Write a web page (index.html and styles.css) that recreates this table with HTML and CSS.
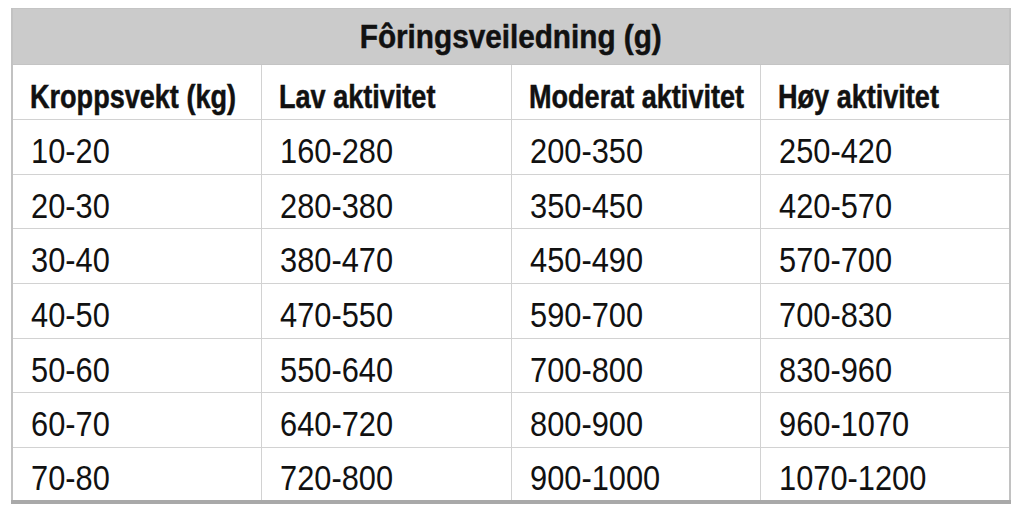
FILE: index.html
```html
<!DOCTYPE html>
<html lang="no">
<head>
<meta charset="utf-8">
<link rel="stylesheet" href="styles.css">
</head>
<body>
<div class="wrap">
<table class="feed">
  <thead>
    <tr class="head"><th class="title" colspan="4"><span class="t">Fôringsveiledning (g)</span></th></tr>
    <tr class="cols"><th><span class="t">Kroppsvekt (kg)</span></th><th><span class="t">Lav aktivitet</span></th><th><span class="t">Moderat aktivitet</span></th><th><span class="t">Høy aktivitet</span></th></tr>
  </thead>
  <tbody>
    <tr><td><span class="t">10-20</span></td><td><span class="t">160-280</span></td><td><span class="t">200-350</span></td><td><span class="t">250-420</span></td></tr>
    <tr><td><span class="t">20-30</span></td><td><span class="t">280-380</span></td><td><span class="t">350-450</span></td><td><span class="t">420-570</span></td></tr>
    <tr><td><span class="t">30-40</span></td><td><span class="t">380-470</span></td><td><span class="t">450-490</span></td><td><span class="t">570-700</span></td></tr>
    <tr><td><span class="t">40-50</span></td><td><span class="t">470-550</span></td><td><span class="t">590-700</span></td><td><span class="t">700-830</span></td></tr>
    <tr><td><span class="t">50-60</span></td><td><span class="t">550-640</span></td><td><span class="t">700-800</span></td><td><span class="t">830-960</span></td></tr>
    <tr><td><span class="t">60-70</span></td><td><span class="t">640-720</span></td><td><span class="t">800-900</span></td><td><span class="t">960-1070</span></td></tr>
    <tr><td><span class="t">70-80</span></td><td><span class="t">720-800</span></td><td><span class="t">900-1000</span></td><td><span class="t">1070-1200</span></td></tr>
  </tbody>
</table>
</div>
</body>
</html>
```

FILE: styles.css
```css
html, body {
  margin: 0;
  padding: 0;
  background: #ffffff;
}
.wrap {
  padding: 8px 0 0 11px;
}
.feed {
  width: 1000px;
  border-collapse: collapse;
  table-layout: fixed;
  font-family: "Liberation Sans", Arial, sans-serif;
  color: #111;
  border-left: 2px solid #c2c2c2;
  border-right: 2px solid #c2c2c2;
  border-top: 1px solid #d6d6d6;
  border-bottom: 4px solid #a9a9a9;
}
.feed th, .feed td {
  border: 1px solid #d2d2d2;
  text-align: left;
  padding: 7px 0 0 18px;
  height: 54.7px;
  box-sizing: border-box;
  white-space: nowrap;
  overflow: visible;
  line-height: 1;
}
.feed td {
  font-size: 35px;
}
.feed th {
  font-weight: bold;
  font-size: 33px;
  -webkit-text-stroke: 0.5px #111;
}
.t {
  display: inline-block;
  transform-origin: left center;
}
.feed td .t {
  transform: scaleX(0.88);
}
.feed .cols th {
  height: 55px;
  padding-top: 8px;
  padding-left: 17px;
}
.feed .cols th .t {
  transform: scaleX(0.82);
}
.feed .title {
  background: #cbcbcb;
  text-align: center;
  padding: 0;
  height: 56px;
  border-color: #c4c4c4;
}
.feed .title .t {
  transform-origin: center center;
  transform: scaleX(0.9);
}
```
